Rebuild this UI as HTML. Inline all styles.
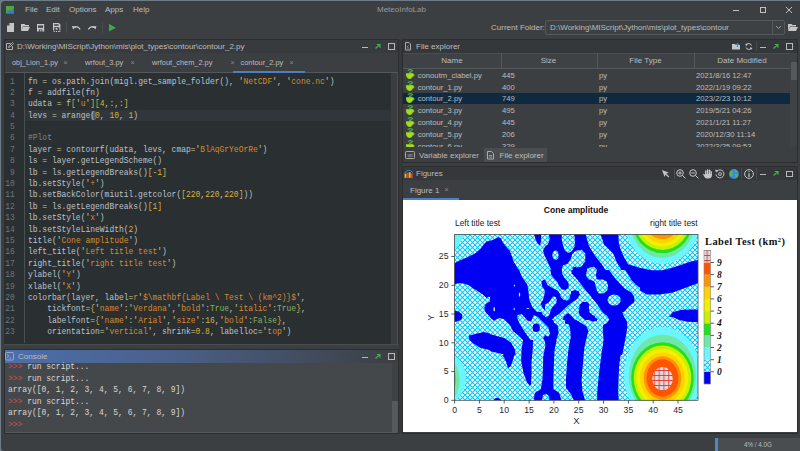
<!DOCTYPE html>
<html><head><meta charset="utf-8"><style>
*{margin:0;padding:0;box-sizing:border-box}
html,body{width:800px;height:451px;overflow:hidden;background:#6e7c88}
body{position:relative;font-family:"Liberation Sans",sans-serif;font-size:8px;color:#bcbcbc}
.a{position:absolute}
.t{position:absolute;white-space:pre;line-height:10px}
i{font-style:normal}
#win{left:1px;top:1px;width:799px;height:450px;background:#3c3f41;border-top-left-radius:4px;border-bottom-left-radius:3px;overflow:hidden}
.mono{font-family:"Liberation Mono",monospace;font-size:8px;white-space:pre}
.code{color:#bcc4ca}
.code .o{color:#d6c99a}
.code .b{color:#d2b048}
.code .s{color:#d98a2c}
.code .n{color:#d6b23a}
.code .k{color:#86b45e}
.code .c{color:#7d878c}
.ln{color:#6b767d;text-align:right}
svg{position:absolute;overflow:visible}
.x{font-size:7px;color:#8d8d8d}
</style></head><body>
<div id="win" class="a"></div>
<svg style="left:6px;top:6px" width="8" height="8" viewBox="0 0 8 8"><rect x="0" y="0" width="8" height="7.5" fill="#3fae3f"/><path d="M0 7.5 L3 4 L5 5 L8 2 L8 7.5Z" fill="#2a7fd4"/><circle cx="4" cy="5" r="0.9" fill="#d24a3a"/><circle cx="1.8" cy="2" r="0.8" fill="#d27a4a"/></svg>
<div class="t" style="left:25px;top:5px">File</div>
<div class="t" style="left:46px;top:5px">Edit</div>
<div class="t" style="left:69px;top:5px">Options</div>
<div class="t" style="left:105px;top:5px">Apps</div>
<div class="t" style="left:133px;top:5px">Help</div>
<div class="t" style="left:377px;top:5px;color:#9a9a9a">MeteoInfoLab</div>
<div class="a" style="left:733px;top:9.5px;width:6px;height:1px;background:#c0c0c0"></div>
<div class="a" style="left:759.5px;top:7px;width:6px;height:6px;border:1px solid #c0c0c0"></div>
<svg style="left:786px;top:7px" width="6" height="6" viewBox="0 0 6 6"><path d="M0 0L6 6M6 0L0 6" stroke="#c0c0c0" stroke-width="1"/></svg>
<svg style="left:6.5px;top:23px" width="7" height="9" viewBox="0 0 7 9"><path d="M2.5 0H7V9H0V2.5Z" fill="#c6c6c6"/><path d="M0 2.5L2.5 0V2.5Z" fill="#3c3f41"/></svg>
<svg style="left:21px;top:24px" width="9" height="7" viewBox="0 0 9 7"><path d="M0 0H3.5L4.5 1H8V2.5H2L0 7Z" fill="#c6c6c6"/><path d="M2 3H9L7 7H0Z" fill="#c6c6c6"/></svg>
<svg style="left:37px;top:23.8px" width="7.2" height="7.5" viewBox="0 0 7.2 7.5"><path d="M0 0H7.2V7.5H0Z M1.1 1.4V3.7H6.1V1.4Z M1.9 5.5V7.5H5.3V5.5Z" fill="#c6c6c6" fill-rule="evenodd"/><rect x="2.9" y="6.2" width="1.6" height="1.1" fill="#c6c6c6"/></svg>
<svg style="left:52.6px;top:23px" width="7.4" height="9" viewBox="0 0 7.4 9"><path d="M0 0H5.9L7.4 1.5V7.6H6.4V4.3H1.2V7.6H0Z M1.2 1.3V2.8H5.6V1.3Z" fill="#c6c6c6" fill-rule="evenodd"/><rect x="2.6" y="5.2" width="2" height="1.6" fill="#c6c6c6"/><rect x="0.8" y="8" width="1.2" height="1" fill="#c6c6c6"/><rect x="2.9" y="8" width="1.2" height="1" fill="#c6c6c6"/><rect x="5" y="8" width="1.2" height="1" fill="#c6c6c6"/><rect x="6.4" y="8" width="1" height="1" fill="#c6c6c6"/></svg>
<div class="a" style="left:66px;top:21.5px;width:1px;height:11.5px;background:#4a4d4f"></div>
<svg style="left:71.8px;top:24.6px" width="8.5" height="5" viewBox="0 0 8.5 5"><path d="M2.4 2.6Q5.2 0.2 8.2 4.4" stroke="#c6c6c6" stroke-width="1.3" fill="none"/><path d="M0 0.9L3.9 1.4L1.1 4.6Z" fill="#c6c6c6"/></svg>
<svg style="left:87.8px;top:24.6px" width="8.5" height="5" viewBox="0 0 8.5 5"><path d="M6.1 2.6Q3.3 0.2 0.3 4.4" stroke="#c6c6c6" stroke-width="1.3" fill="none"/><path d="M8.5 0.9L4.6 1.4L7.4 4.6Z" fill="#c6c6c6"/></svg>
<div class="a" style="left:101.5px;top:21.5px;width:1px;height:11.5px;background:#4a4d4f"></div>
<svg style="left:108.5px;top:24px" width="7" height="7.5" viewBox="0 0 7 7.5"><path d="M0 0L7 3.75L0 7.5Z" fill="#3ea94b"/></svg>
<div class="t" style="left:491px;top:23px">Current Folder:</div>
<div class="a" style="left:545px;top:20px;width:240px;height:15px;border:1px solid #56595b;border-radius:2px;background:#3e4143"></div>
<div class="a" style="left:772px;top:21px;width:1px;height:13px;background:#56595b"></div>
<svg style="left:776px;top:25.5px" width="5" height="3" viewBox="0 0 5 3"><path d="M0 0L2.5 2.5L5 0" stroke="#a8a8a8" stroke-width="0.9" fill="none"/></svg>
<div class="t" style="left:550px;top:23px">D:\Working\MIScript\Jython\mis\plot_types\contour</div>
<svg style="left:788px;top:24px" width="10" height="7" viewBox="0 0 10 7"><path d="M0 0H3.5L4.5 1H8V2.5H2L0 7Z" fill="#c6c6c6"/><path d="M2 3H10L8 7H0Z" fill="#c6c6c6"/></svg>
<div class="a" style="left:4px;top:39px;width:395px;height:305px;background:#3c3f41;border:1px solid #2b2d2e"></div>
<div class="a" style="left:5px;top:40px;width:393px;height:12.5px;background:#383b3d"></div>
<svg style="left:6px;top:42px" width="8" height="8" viewBox="0 0 8 8"><path d="M0.5 1.5H4.5M0.5 1.5V7.5H6.5V4" stroke="#b0b0b0" stroke-width="1" fill="none"/><path d="M2.5 5.5L3 4L6.5 0.5L7.5 1.5L4 5Z" fill="none" stroke="#b0b0b0" stroke-width="0.9"/></svg>
<div class="t" style="left:17px;top:41.6px">D:\Working\MIScript\Jython\mis\plot_types\contour\contour_2.py</div>
<div class="a" style="left:362px;top:46.5px;width:6px;height:1px;background:#b8b8b8"></div>
<svg style="left:375px;top:43.5px" width="6" height="5" viewBox="0 0 6 5"><path d="M0.5 4.5L5 0.5M1.8 0.5H5V3.7" stroke="#3cb04a" stroke-width="1.2" fill="none"/></svg>
<div class="a" style="left:388px;top:43.0px;width:6.5px;height:6.5px;border:1px solid #b8b8b8"></div>
<div class="t" style="left:12px;top:58.3px;font-size:7.4px">obj_Lion_1.py</div>
<div class="t" style="left:85px;top:58.3px;font-size:7.4px">wrfout_3.py</div>
<div class="t" style="left:152px;top:58.3px;font-size:7.4px">wrfout_chem_2.py</div>
<div class="t" style="left:240.5px;top:58.3px;font-size:7.4px">contour_2.py</div>
<div class="t x" style="left:63.5px;top:57.5px">×</div>
<div class="t x" style="left:130.5px;top:57.5px">×</div>
<div class="t x" style="left:230.5px;top:57.5px">×</div>
<div class="t x" style="left:289.5px;top:57.5px">×</div>
<div class="a" style="left:5px;top:72px;width:393px;height:272.5px;background:#2a2f32;border-top:1px solid #55585a;border-bottom:1px solid #4a4d50"></div>
<div class="a" style="left:24px;top:73px;width:1px;height:270px;background:#4a4f52"></div>
<div class="a" style="left:233px;top:71px;width:72px;height:2px;background:#4d80c0"></div>
<div class="a" style="left:25px;top:109.5px;width:366px;height:11px;background:#30363a"></div>
<div class="a" style="left:91px;top:110.5px;width:5px;height:9.5px;background:#46606f;border-radius:1.5px"></div>
<div class="a mono ln" style="left:1px;top:75.5px;width:13.8px;line-height:11.39px;font-size:9.2px;transform:scaleX(0.8682);transform-origin:100% 0">1
2
3
4
5
6
7
8
9
10
11
12
13
14
15
16
17
18
19
20
21
22
23</div>
<div class="a mono code" style="left:28.4px;top:75.5px;line-height:11.39px;font-size:9.2px;transform:scaleX(0.8682);transform-origin:0 0">fn <i class="o">=</i> os<i class="o">.</i>path<i class="o">.</i>join(migl<i class="o">.</i>get_sample_folder(), <i class="o">'</i><i class="s">NetCDF</i><i class="o">'</i>, <i class="o">'</i><i class="s">cone.nc</i><i class="o">'</i>)
f <i class="o">=</i> addfile(fn)
udata <i class="o">=</i> f<i class="b">[</i><i class="o">'</i><i class="s">u</i><i class="o">'</i><i class="b">]</i><i class="b">[</i><i class="n">4</i>,<i class="o">:</i>,<i class="o">:</i><i class="b">]</i>
levs <i class="o">=</i> arange(<i class="n">0</i>, <i class="n">10</i>, <i class="n">1</i>)

<i class="c">#Plot</i>
layer <i class="o">=</i> contourf(udata, levs, cmap<i class="o">=</i><i class="o">'</i><i class="s">BlAqGrYeOrRe</i><i class="o">'</i>)
ls <i class="o">=</i> layer<i class="o">.</i>getLegendScheme()
lb <i class="o">=</i> ls<i class="o">.</i>getLegendBreaks()<i class="b">[</i><i class="o">-</i><i class="n">1</i><i class="b">]</i>
lb<i class="o">.</i>setStyle(<i class="o">'</i><i class="s">+</i><i class="o">'</i>)
lb<i class="o">.</i>setBackColor(miutil<i class="o">.</i>getcolor(<i class="b">[</i><i class="n">220</i>,<i class="n">220</i>,<i class="n">220</i><i class="b">]</i>))
lb <i class="o">=</i> ls<i class="o">.</i>getLegendBreaks()<i class="b">[</i><i class="n">1</i><i class="b">]</i>
lb<i class="o">.</i>setStyle(<i class="o">'</i><i class="s">x</i><i class="o">'</i>)
lb<i class="o">.</i>setStyleLineWidth(<i class="n">2</i>)
title(<i class="o">'</i><i class="s">Cone amplitude</i><i class="o">'</i>)
left_title(<i class="o">'</i><i class="s">Left title test</i><i class="o">'</i>)
right_title(<i class="o">'</i><i class="s">right title test</i><i class="o">'</i>)
ylabel(<i class="o">'</i><i class="s">Y</i><i class="o">'</i>)
xlabel(<i class="o">'</i><i class="s">X</i><i class="o">'</i>)
colorbar(layer, label<i class="o">=</i><i class="s">r</i><i class="o">'</i><i class="s">$\mathbf{Label \ Test \ (km^2)}$</i><i class="o">'</i>,
    tickfont<i class="o">=</i><i class="b">{</i><i class="o">'</i><i class="s">name</i><i class="o">'</i><i class="o">:</i><i class="o">'</i><i class="s">Verdana</i><i class="o">'</i>,<i class="o">'</i><i class="s">bold</i><i class="o">'</i><i class="o">:</i><i class="k">True</i>,<i class="o">'</i><i class="s">italic</i><i class="o">'</i><i class="o">:</i><i class="k">True</i><i class="b">}</i>,
    labelfont<i class="o">=</i><i class="b">{</i><i class="o">'</i><i class="s">name</i><i class="o">'</i><i class="o">:</i><i class="o">'</i><i class="s">Arial</i><i class="o">'</i>,<i class="o">'</i><i class="s">size</i><i class="o">'</i><i class="o">:</i><i class="n">16</i>,<i class="o">'</i><i class="s">bold</i><i class="o">'</i><i class="o">:</i><i class="k">False</i><i class="b">}</i>,
    orientation<i class="o">=</i><i class="o">'</i><i class="s">vertical</i><i class="o">'</i>, shrink<i class="o">=</i><i class="n">0.8</i>, labelloc<i class="o">=</i><i class="o">'</i><i class="s">top</i><i class="o">'</i>)</div>
<div class="a" style="left:391px;top:73px;width:6px;height:271px;background:#3a3e41"></div>
<div class="a" style="left:397px;top:72px;width:1px;height:273px;background:#4e5154"></div>
<div class="a" style="left:399px;top:39px;width:3px;height:395px;background:#363839"></div>
<div class="a" style="left:4px;top:349px;width:395px;height:85px;background:#45484a;border:1px solid #2b2d2e"></div>
<div class="a" style="left:5px;top:350px;width:393px;height:12.5px;background:linear-gradient(90deg,#4c6fae 0%,#4a5f86 45%,#3c3f41 100%)"></div>
<svg style="left:5px;top:352px" width="9" height="8.5" viewBox="0 0 9 8.5"><rect x="0.5" y="0.5" width="8" height="7.5" rx="1" fill="none" stroke="#a9b6cc" stroke-width="0.8"/><path d="M2 2.3L3.8 3.9L2 5.5M4.2 6.1H6" stroke="#a9b6cc" stroke-width="0.8" fill="none"/></svg>
<div class="t" style="left:18px;top:352px">Console</div>
<div class="a" style="left:362px;top:356.5px;width:6px;height:1px;background:#b8b8b8"></div>
<svg style="left:375px;top:353.5px" width="6" height="5" viewBox="0 0 6 5"><path d="M0.5 4.5L5 0.5M1.8 0.5H5V3.7" stroke="#3cb04a" stroke-width="1.2" fill="none"/></svg>
<div class="a" style="left:388px;top:353.0px;width:6.5px;height:6.5px;border:1px solid #b8b8b8"></div>
<div class="a mono" style="left:8px;top:361.4px;line-height:11.5px;color:#d8d8d8;font-size:9.2px;transform:scaleX(0.8682);transform-origin:0 0"><i class="p">&gt;&gt;&gt;</i> run script...
<i class="p">&gt;&gt;&gt;</i> run script...
array([0, 1, 2, 3, 4, 5, 6, 7, 8, 9])
<i class="p">&gt;&gt;&gt;</i> run script...
array([0, 1, 2, 3, 4, 5, 6, 7, 8, 9])
<i class="p">&gt;&gt;&gt;</i></div>
<style>.p{color:#d24a4a}</style>
<div class="a" style="left:5px;top:432px;width:393px;height:1px;background:#56595b"></div>
<div class="a" style="left:391.5px;top:363px;width:6.5px;height:69px;background:#3f4244"></div>
<div class="a" style="left:391.5px;top:401px;width:6.5px;height:31px;background:#55595b"></div>
<div class="a" style="left:402px;top:39px;width:396px;height:124px;background:#3c3f41;border:1px solid #2b2d2e"></div>
<div class="a" style="left:403px;top:40px;width:394px;height:12.5px;background:#35383a"></div>
<svg style="left:404.5px;top:41.5px" width="6" height="8.5" viewBox="0 0 6 8.5"><path d="M0.5 0.5H4L5.5 2V8H0.5Z" fill="none" stroke="#b8b8b8" stroke-width="0.9"/><path d="M2 5L3.5 3.5M2 6H4" stroke="#b8b8b8" stroke-width="0.7"/></svg>
<div class="t" style="left:416px;top:42px">File explorer</div>
<svg style="left:731.5px;top:42.5px" width="8" height="6.5" viewBox="0 0 8 6.5"><path d="M0 1H3L4 2H8V6.5H0Z" fill="#c6c6c6"/><path d="M5.5 4V0.8M4.2 2L5.5 0.5L6.8 2" stroke="#3a8fd8" stroke-width="1.1" fill="none"/></svg>
<svg style="left:745px;top:42.5px" width="7.5" height="7" viewBox="0 0 7.5 7"><path d="M6.5 2.5A3 3 0 0 0 1 2.2M1 4.5A3 3 0 0 0 6.5 4.8" stroke="#c6c6c6" stroke-width="1" fill="none"/><path d="M0 1L2 3.2L2.4 0.5Z M7.5 6L5.5 3.8L5.1 6.5Z" fill="#c6c6c6"/></svg>
<div class="a" style="left:756px;top:41px;width:1px;height:10px;background:#474a4c"></div>
<div class="a" style="left:760px;top:46.5px;width:6px;height:1px;background:#b8b8b8"></div>
<svg style="left:773px;top:43.5px" width="6" height="5" viewBox="0 0 6 5"><path d="M0.5 4.5L5 0.5M1.8 0.5H5V3.7" stroke="#3cb04a" stroke-width="1.2" fill="none"/></svg>
<div class="a" style="left:786px;top:43.0px;width:6.5px;height:6.5px;border:1px solid #b8b8b8"></div>
<div class="a" style="left:403px;top:52.5px;width:387px;height:16px;background:#3f4244;border-top:1px solid #4a4d50;border-bottom:1px solid #55585a"></div>
<div class="a" style="left:500.5px;top:53px;width:1px;height:15px;background:#55585a"></div>
<div class="a" style="left:596.5px;top:53px;width:1px;height:15px;background:#55585a"></div>
<div class="a" style="left:693.5px;top:53px;width:1px;height:15px;background:#55585a"></div>
<div class="t" style="left:412px;width:80px;text-align:center;top:56px">Name</div>
<div class="t" style="left:508.5px;width:80px;text-align:center;top:56px">Size</div>
<div class="t" style="left:605.5px;width:80px;text-align:center;top:56px">File Type</div>
<div class="t" style="left:702px;width:80px;text-align:center;top:56px">Date Modified</div>
<div class="a" style="left:403px;top:92.5px;width:387px;height:11.6px;background:#0f2a40"></div>
<div class="a" style="left:403px;top:69px;width:387px;height:78px;overflow:hidden"></div>
<div class="a" style="left:0;top:0;width:800px;height:147px;overflow:hidden"><svg style="left:406px;top:69.2px" width="9" height="10" viewBox="0 0 9 10"><path d="M1.8 1.6Q4.2 -0.4 6.6 1.4Q5.5 3 3 3.4Q5.2 3.9 5.8 5" stroke="#45a845" stroke-width="1.15" fill="none"/><path d="M0 4.2H7.2Q7.3 9.6 3.6 9.9Q-0.1 9.6 0 4.2Z" fill="#a4dc1c"/><path d="M7 5Q9.2 5.3 7.2 7.4" stroke="#a4dc1c" stroke-width="1" fill="none"/></svg><div class="t" style="left:417.7px;top:70.7px;font-size:7.7px">conoutm_clabel.py</div><div class="t" style="left:502px;top:70.7px;font-size:7.7px">445</div><div class="t" style="left:599px;top:70.7px;font-size:7.7px">py</div><div class="t" style="left:696px;top:70.7px;font-size:7.7px">2021/8/16 12:47</div><svg style="left:406px;top:81.05px" width="9" height="10" viewBox="0 0 9 10"><path d="M1.8 1.6Q4.2 -0.4 6.6 1.4Q5.5 3 3 3.4Q5.2 3.9 5.8 5" stroke="#45a845" stroke-width="1.15" fill="none"/><path d="M0 4.2H7.2Q7.3 9.6 3.6 9.9Q-0.1 9.6 0 4.2Z" fill="#a4dc1c"/><path d="M7 5Q9.2 5.3 7.2 7.4" stroke="#a4dc1c" stroke-width="1" fill="none"/></svg><div class="t" style="left:417.7px;top:82.55px;font-size:7.7px">contour_1.py</div><div class="t" style="left:502px;top:82.55px;font-size:7.7px">400</div><div class="t" style="left:599px;top:82.55px;font-size:7.7px">py</div><div class="t" style="left:696px;top:82.55px;font-size:7.7px">2022/1/19 09:22</div><svg style="left:406px;top:92.9px" width="9" height="10" viewBox="0 0 9 10"><path d="M1.8 1.6Q4.2 -0.4 6.6 1.4Q5.5 3 3 3.4Q5.2 3.9 5.8 5" stroke="#45a845" stroke-width="1.15" fill="none"/><path d="M0 4.2H7.2Q7.3 9.6 3.6 9.9Q-0.1 9.6 0 4.2Z" fill="#a4dc1c"/><path d="M7 5Q9.2 5.3 7.2 7.4" stroke="#a4dc1c" stroke-width="1" fill="none"/></svg><div class="t" style="left:417.7px;top:94.4px;font-size:7.7px">contour_2.py</div><div class="t" style="left:502px;top:94.4px;font-size:7.7px">749</div><div class="t" style="left:599px;top:94.4px;font-size:7.7px">py</div><div class="t" style="left:696px;top:94.4px;font-size:7.7px">2023/2/23 10:12</div><svg style="left:406px;top:104.75px" width="9" height="10" viewBox="0 0 9 10"><path d="M1.8 1.6Q4.2 -0.4 6.6 1.4Q5.5 3 3 3.4Q5.2 3.9 5.8 5" stroke="#45a845" stroke-width="1.15" fill="none"/><path d="M0 4.2H7.2Q7.3 9.6 3.6 9.9Q-0.1 9.6 0 4.2Z" fill="#a4dc1c"/><path d="M7 5Q9.2 5.3 7.2 7.4" stroke="#a4dc1c" stroke-width="1" fill="none"/></svg><div class="t" style="left:417.7px;top:106.25px;font-size:7.7px">contour_3.py</div><div class="t" style="left:502px;top:106.25px;font-size:7.7px">495</div><div class="t" style="left:599px;top:106.25px;font-size:7.7px">py</div><div class="t" style="left:696px;top:106.25px;font-size:7.7px">2019/5/21 04:26</div><svg style="left:406px;top:116.60000000000001px" width="9" height="10" viewBox="0 0 9 10"><path d="M1.8 1.6Q4.2 -0.4 6.6 1.4Q5.5 3 3 3.4Q5.2 3.9 5.8 5" stroke="#45a845" stroke-width="1.15" fill="none"/><path d="M0 4.2H7.2Q7.3 9.6 3.6 9.9Q-0.1 9.6 0 4.2Z" fill="#a4dc1c"/><path d="M7 5Q9.2 5.3 7.2 7.4" stroke="#a4dc1c" stroke-width="1" fill="none"/></svg><div class="t" style="left:417.7px;top:118.10000000000001px;font-size:7.7px">contour_4.py</div><div class="t" style="left:502px;top:118.10000000000001px;font-size:7.7px">445</div><div class="t" style="left:599px;top:118.10000000000001px;font-size:7.7px">py</div><div class="t" style="left:696px;top:118.10000000000001px;font-size:7.7px">2021/1/21 11:27</div><svg style="left:406px;top:128.45px" width="9" height="10" viewBox="0 0 9 10"><path d="M1.8 1.6Q4.2 -0.4 6.6 1.4Q5.5 3 3 3.4Q5.2 3.9 5.8 5" stroke="#45a845" stroke-width="1.15" fill="none"/><path d="M0 4.2H7.2Q7.3 9.6 3.6 9.9Q-0.1 9.6 0 4.2Z" fill="#a4dc1c"/><path d="M7 5Q9.2 5.3 7.2 7.4" stroke="#a4dc1c" stroke-width="1" fill="none"/></svg><div class="t" style="left:417.7px;top:129.95px;font-size:7.7px">contour_5.py</div><div class="t" style="left:502px;top:129.95px;font-size:7.7px">206</div><div class="t" style="left:599px;top:129.95px;font-size:7.7px">py</div><div class="t" style="left:696px;top:129.95px;font-size:7.7px">2020/12/30 11:14</div><svg style="left:406px;top:140.29999999999998px" width="9" height="10" viewBox="0 0 9 10"><path d="M1.8 1.6Q4.2 -0.4 6.6 1.4Q5.5 3 3 3.4Q5.2 3.9 5.8 5" stroke="#45a845" stroke-width="1.15" fill="none"/><path d="M0 4.2H7.2Q7.3 9.6 3.6 9.9Q-0.1 9.6 0 4.2Z" fill="#a4dc1c"/><path d="M7 5Q9.2 5.3 7.2 7.4" stroke="#a4dc1c" stroke-width="1" fill="none"/></svg><div class="t" style="left:417.7px;top:141.79999999999998px;font-size:7.7px">contour_6.py</div><div class="t" style="left:502px;top:141.79999999999998px;font-size:7.7px">329</div><div class="t" style="left:599px;top:141.79999999999998px;font-size:7.7px">py</div><div class="t" style="left:696px;top:141.79999999999998px;font-size:7.7px">2022/3/25 09:53</div></div>
<div class="a" style="left:790px;top:53px;width:7px;height:94px;background:#3f4244"></div>
<div class="a" style="left:790.5px;top:62px;width:6px;height:18px;background:#55595b;border-radius:1px"></div>
<div class="a" style="left:403px;top:147px;width:394px;height:15px;background:#3c3f41"></div>
<div class="a" style="left:484px;top:147.5px;width:63px;height:14px;background:#4a4d50"></div>
<svg style="left:405px;top:151px" width="10" height="8" viewBox="0 0 10 8"><rect x="0.5" y="0.5" width="9" height="7" rx="1" fill="none" stroke="#b8b8b8" stroke-width="0.9"/><text x="5" y="6" font-size="4.5" text-anchor="middle" fill="#b8b8b8" font-family="Liberation Sans">uri</text></svg>
<div class="t" style="left:419px;top:150.8px">Variable explorer</div>
<svg style="left:487px;top:150.5px" width="7" height="8.5" viewBox="0 0 7 8.5"><path d="M0.5 0.5H4.5L6.5 2.5V8H0.5Z" fill="none" stroke="#b8b8b8" stroke-width="0.9"/><path d="M2 4.5H5M2 6H5" stroke="#b8b8b8" stroke-width="0.7"/></svg>
<div class="t" style="left:499.6px;top:150.8px">File explorer</div>
<div class="a" style="left:402px;top:166px;width:396px;height:268px;background:#3c3f41;border:1px solid #2b2d2e"></div>
<div class="a" style="left:403px;top:167px;width:394px;height:13px;background:#35383a"></div>
<svg style="left:403.5px;top:169px" width="9" height="9" viewBox="0 0 9 9"><path d="M0.5 4.5Q4 -1.5 8.8 3.5" stroke="#3a7fd0" stroke-width="1" fill="none"/><path d="M0 8.6H9" stroke="#9a9a9a" stroke-width="0.6"/><rect x="0.6" y="4.6" width="1.9" height="3.8" fill="#e8c21a"/><rect x="2.7" y="3.6" width="1.9" height="4.8" fill="#e03a3a"/><rect x="4.8" y="3.4" width="1.9" height="5" fill="#e8c21a"/><rect x="6.9" y="4.4" width="1.9" height="4" fill="#e03a3a"/></svg>
<div class="t" style="left:416px;top:169px">Figures</div>
<div class="t" style="left:410px;top:185.8px">Figure 1</div>
<div class="t x" style="left:444.5px;top:184.5px">×</div>
<div class="a" style="left:403px;top:198px;width:55.5px;height:2px;background:#4d80c0"></div>
<svg style="left:662px;top:169.5px" width="7.5" height="7.5" viewBox="0 0 7.5 7.5"><path d="M0 0L7 2.8L4.2 3.6L7.2 6.6L6.4 7.4L3.4 4.4L2.6 7Z" fill="#c6c6c6"/></svg>
<div class="a" style="left:673.5px;top:168px;width:1px;height:11px;background:#4a4d4f"></div>
<svg style="left:676px;top:168.5px" width="10" height="10" viewBox="0 0 10 10"><circle cx="4" cy="4" r="3.3" stroke="#c6c6c6" stroke-width="1" fill="none"/><path d="M6.5 6.5L9.5 9.5M2.3 4H5.7M4 2.3V5.7" stroke="#c6c6c6" stroke-width="1"/></svg>
<svg style="left:689px;top:168.5px" width="10" height="10" viewBox="0 0 10 10"><circle cx="4" cy="4" r="3.3" stroke="#c6c6c6" stroke-width="1" fill="none"/><path d="M6.5 6.5L9.5 9.5M2.3 4H5.7" stroke="#c6c6c6" stroke-width="1"/></svg>
<svg style="left:703px;top:168.8px" width="9" height="9.5" viewBox="0 0 9 9.5"><rect x="2" y="1.2" width="1.5" height="5" rx="0.75" fill="#c6c6c6"/><rect x="3.9" y="0.2" width="1.5" height="5.5" rx="0.75" fill="#c6c6c6"/><rect x="5.8" y="0.6" width="1.5" height="5.3" rx="0.75" fill="#c6c6c6"/><rect x="7.5" y="2" width="1.4" height="4" rx="0.7" fill="#c6c6c6"/><path d="M2 5H8.9V6.5Q8.6 9.5 5.5 9.5H4Q2.5 9.5 1.5 8L0.2 5.8Q0 5 0.8 4.8L2 5.8Z" fill="#c6c6c6"/></svg>
<svg style="left:715px;top:168.5px" width="10" height="10" viewBox="0 0 10 10"><path d="M2 2.2A4 4 0 1 1 1 5.5" stroke="#c6c6c6" stroke-width="1" fill="none"/><path d="M0.2 0.5L3.2 1.5L1 3.7Z" fill="#c6c6c6"/><circle cx="5" cy="5" r="1.5" stroke="#c6c6c6" stroke-width="0.9" fill="none"/></svg>
<svg style="left:728.5px;top:168.5px" width="10" height="10" viewBox="0 0 10 10"><circle cx="5" cy="5" r="5" fill="#3a8ad8"/><path d="M2 1.5Q4 2 3.8 4Q2.5 5 3.5 7Q2 8 1 6.5Q0 4 2 1.5Z M5.5 0.5Q8 1 8.5 3Q7 3.5 6 2.5Z M6 5Q8 4.5 9 6Q8 8.5 6.5 9Q6.5 7 6 5Z" fill="#5ab84a"/></svg>
<div class="a" style="left:740.5px;top:168px;width:1px;height:11px;background:#4a4d4f"></div>
<svg style="left:744px;top:168.5px" width="10" height="10" viewBox="0 0 10 10"><circle cx="5" cy="5" r="4.4" stroke="#c6c6c6" stroke-width="1" fill="none"/><path d="M5 4.2V8" stroke="#c6c6c6" stroke-width="1.2"/><circle cx="5" cy="2.6" r="0.7" fill="#c6c6c6"/></svg>
<div class="a" style="left:756px;top:168px;width:1px;height:11px;background:#4a4d4f"></div>
<div class="a" style="left:760px;top:174px;width:6px;height:1px;background:#b8b8b8"></div>
<svg style="left:773px;top:171px" width="6" height="5" viewBox="0 0 6 5"><path d="M0.5 4.5L5 0.5M1.8 0.5H5V3.7" stroke="#3cb04a" stroke-width="1.2" fill="none"/></svg>
<div class="a" style="left:786px;top:170.5px;width:6.5px;height:6.5px;border:1px solid #b8b8b8"></div>
<div class="a" style="left:403px;top:200px;width:394px;height:232px;background:#fff"></div>
<svg style="left:0;top:0" width="800" height="451" viewBox="0 0 800 451"><defs>
<pattern id="hx" patternUnits="userSpaceOnUse" width="5" height="5"><rect width="5" height="5" fill="#ffffff"/><path d="M-1,-1L6,6M6,-1L-1,6" stroke="#00c8ff" stroke-width="1.1"/></pattern>
<pattern id="hp" patternUnits="userSpaceOnUse" width="4.8" height="5"><rect width="4.8" height="5" fill="#dcdcdc"/><path d="M1.6,0V5M0,0.5H4.8" stroke="#f02828" stroke-width="0.85"/></pattern>
<clipPath id="pc"><rect x="454.6" y="234.2" width="243.4" height="166.1"/></clipPath>
<clipPath id="c0"><rect x="454" y="233" width="81" height="56"/></clipPath><clipPath id="c1"><rect x="535" y="233" width="41" height="56"/></clipPath><clipPath id="c2"><rect x="576" y="233" width="122" height="84"/></clipPath><clipPath id="c3"><rect x="454" y="289" width="81" height="28"/></clipPath><clipPath id="c4"><rect x="454" y="317" width="122" height="84"/></clipPath><clipPath id="c5"><rect x="576" y="317" width="122" height="84"/></clipPath><clipPath id="c6"><rect x="490" y="270" width="150" height="85"/></clipPath><clipPath id="c7"><rect x="518" y="340" width="62" height="61"/></clipPath><clipPath id="c8"><rect x="545" y="270" width="50" height="50"/></clipPath></defs><g clip-path="url(#pc)"><rect x="454" y="233" width="245" height="168" fill="url(#hx)"/><g clip-path="url(#c0)"><path d="M455.0,262.8 L461.5,259.7 L468.9,256.6 L475.7,252.9 L480.7,248.5 L483.8,244.2 L486.5,241.4 L491.3,240.5 L495.6,238.6 L498.7,237.0 L501.0,238.6 L503.1,242.9 L506.2,246.7 L509.9,251.0 L511.8,256.0 L513.6,261.6 L517.4,267.8 L521.7,274.0 L525.4,279.0 L528.5,285.2 L529.2,289.0 L473.9,289.0 L468.9,285.2 L462.7,283.3 L457.7,283.3 L454.0,284.6 L454.0,262.8Z" fill="#0000f5"/><path d="M533.5,233.0 L536.0,233.0 L536.0,240.0Z" fill="#0000f5"/><path d="M454.0,233.0 L466.4,233.0 L462.7,238.0 L459.0,244.2 L455.0,250.4 L454.0,251.0Z" fill="#5ff8ff"/></g><g clip-path="url(#c1)"><path d="M535,233H576V289H535Z" fill="#0000f5"/><path d="M535.0,238.0 L537.5,243.6 L540.0,245.4 L541.2,240.5 L541.0,235.5 L542.5,233.0 L548.7,233.0 L549.7,239.8 L548.0,244.2 L544.9,246.7 L543.1,250.4 L544.7,256.0 L547.4,261.6 L550.5,268.4 L554.3,274.6 L557.4,280.2 L559.2,285.2 L558.6,289.0 L547.4,289.0 L546.4,283.3 L544.9,280.0 L542.7,279.6 L541.2,282.7 L541.0,289.0 L535.0,289.0Z" fill="url(#hx)"/><path d="M561.7,233.0 L574.1,233.0 L575.0,240.5 L574.5,246.7 L571.6,251.6 L567.9,252.9 L564.8,250.4 L563.0,245.4 L561.7,239.2Z" fill="url(#hx)"/><path d="M574.8,251.6 L581.0,250.4 L585.3,252.3 L585.9,257.8 L584.1,262.8 L580.3,265.9 L576.0,266.5 L572.3,267.8 L573.5,272.8 L577.2,279.0 L581.0,283.9 L583.4,289.0 L568.5,289.0 L567.9,285.2 L566.1,280.2 L563.6,274.0 L561.7,269.0 L563.0,265.3 L567.3,264.1 L570.4,259.7 L572.3,254.1Z" fill="url(#hx)"/><path d="M585.9,233.0 L599.6,233.0 L602.7,242.9 L605.8,250.4 L609.5,255.4 L615.7,257.8 L617.0,257.8 L617.0,277.7 L613.3,274.0 L609.5,269.0 L604.6,264.1 L600.8,259.1 L596.5,252.9 L592.1,246.7 L589.0,241.7Z" fill="url(#hx)"/><path d="M587.2,267.8 L593.4,265.9 L597.1,269.0 L598.4,275.2 L599.6,279.0 L604.6,279.6 L607.7,282.7 L608.3,289.0 L594.6,289.0 L593.4,285.2 L589.7,282.1 L586.6,277.7 L585.9,271.5Z" fill="url(#hx)"/><path d="M552.4,255.1 a3.1,4.7 0 1,0 6.2,0 a3.1,4.7 0 1,0 -6.2,0Z" fill="url(#hx)"/></g><g clip-path="url(#c2)"><path d="M576.0,233.0 L585.3,233.0 L589.0,246.0 L594.6,255.3 L602.1,264.7 L608.6,274.9 L615.1,283.3 L622.6,290.7 L630.0,298.2 L633.7,307.5 L630.0,317.0 L576.0,317.0Z" fill="#0000f5"/><path d="M600.2,233.0 L618.3,233.0 L618.8,242.9 L620.5,249.2 L623.7,256.6 L628.0,264.3 L641.0,268.0 L651.6,270.2 L662.4,270.2 L673.0,267.5 L682.9,264.3 L689.2,262.1 L698.0,260.0 L698.0,283.3 L687.7,287.0 L672.8,292.6 L659.8,294.5 L646.8,294.5 L637.5,288.9 L630.0,281.4 L622.6,272.1 L617.0,262.8 L613.2,253.5 L603.9,244.2Z" fill="#0000f5"/><path d="M669.1,317.0 L672.8,312.1 L682.1,309.7 L691.5,309.4 L698.0,309.4 L698.0,317.0Z" fill="#0000f5"/><path d="M576.0,250.7 L581.6,249.8 L585.3,253.5 L585.3,260.9 L581.6,266.5 L576.0,267.5Z" fill="url(#hx)"/><path d="M587.2,268.4 L593.7,266.5 L597.4,270.2 L597.4,277.7 L603.9,279.6 L607.7,284.2 L606.7,291.7 L601.1,294.5 L596.5,290.7 L594.6,283.3 L590.0,280.5 L586.2,275.8Z" fill="url(#hx)"/><path d="M576.0,288.9 L580.7,294.5 L581.6,300.0 L577.9,307.5 L576.0,311.2Z" fill="url(#hx)"/><path d="M592.8,317.0 L596.5,311.2 L603.9,308.4 L613.2,307.5 L620.7,311.2 L624.4,317.0Z" fill="url(#hx)"/><path d="M607.7,299.5 a6.5,6.1 0 1,0 13,0 a6.5,6.1 0 1,0 -13,0Z" fill="url(#hx)"/></g><g clip-path="url(#c3)"><path d="M474.5,289.0 L528.5,289.0 L529.3,296.5 L530.4,305.1 L533.5,313.8 L536.0,316.0 L536.0,318.8 L531.0,317.6 L526.0,315.7 L521.7,313.8 L518.0,313.8 L516.7,317.0 L518.6,321.9 L522.3,326.3 L527.3,331.2 L530.4,337.4 L532.0,345.0 L524.9,345.0 L521.1,338.7 L516.1,333.1 L511.8,327.5 L506.8,321.9 L501.8,318.6 L496.9,319.1 L493.1,320.1 L489.4,316.3 L485.3,312.0 L484.2,307.6 L485.7,303.9 L489.8,301.4 L490.9,298.3 L489.0,296.5 L486.5,297.9 L482.8,294.6Z" fill="#0000f5"/><path d="M454.0,310.7 L459.0,311.4 L462.4,315.1 L462.1,319.4 L458.3,321.5 L454.0,321.5Z" fill="#0000f5"/></g><g clip-path="url(#c4)"><path d="M454.0,317.0 L462.4,317.0 L461.4,319.8 L455.9,321.7 L454.0,321.7Z" fill="#0000f5"/><path d="M468.9,335.6 L476.3,333.8 L483.8,331.9 L491.2,333.8 L500.6,337.5 L508.0,339.3 L513.6,344.0 L515.5,350.5 L513.6,358.0 L510.8,366.3 L508.0,368.2 L506.1,361.7 L503.3,356.1 L496.8,352.4 L487.5,349.6 L480.1,347.7 L472.6,343.1 L468.9,339.3Z" fill="#0000f5"/><path d="M489.4,317.0 L515.5,317.0 L511.7,319.8 L506.1,321.1 L498.7,320.7 L493.1,319.2Z" fill="#0000f5"/><path d="M516.4,317.0 L527.6,317.0 L526.6,324.4 L528.5,331.9 L531.3,339.3 L533.1,348.7 L532.2,359.8 L531.3,371.0 L530.4,380.3 L528.5,385.5 L525.7,380.3 L522.9,369.1 L521.0,358.0 L522.0,348.7 L520.1,341.2 L515.5,333.8 L511.7,326.3 L513.6,318.9Z" fill="#0000f5"/><path d="M527.6,317.0 L541.5,317.0 L538.7,320.7 L532.2,322.2 L528.5,320.7Z" fill="#0000f5"/><path d="M541.5,333.8 L549.0,335.6 L550.8,343.1 L549.9,354.2 L547.1,365.4 L545.2,376.6 L543.4,387.8 L542.5,395.2 L541.5,401.0 L534.1,401.0 L535.9,391.5 L537.8,380.3 L540.6,367.3 L541.5,354.2 L542.5,343.1Z" fill="#0000f5"/><path d="M545.2,317.0 L556.4,317.0 L555.5,324.4 L552.7,331.9 L548.0,336.6 L543.4,335.6 L546.2,328.2Z" fill="#0000f5"/><path d="M554.6,317.0 L576.0,317.0 L576.0,401.0 L566.7,401.0 L565.7,391.5 L566.7,376.6 L567.6,363.6 L567.6,344.9 L565.7,328.2 L562.0,324.4 L558.3,322.6Z" fill="#0000f5"/><path d="M492.2,401.0 L495.3,398.2 L498.7,397.8 L502.0,401.0Z" fill="#0000f5"/><path d="M532.2,327.6 a3.7,4.1 0 1,0 7.4,0 a3.7,4.1 0 1,0 -7.4,0Z" fill="#0000f5"/></g><g clip-path="url(#c5)"><path d="M576.0,317.0 L580.7,317.0 L584.4,319.8 L587.2,322.6 L586.2,328.2 L585.3,339.3 L583.8,354.2 L582.5,369.1 L581.6,380.3 L582.5,391.5 L585.3,401.0 L576.0,401.0Z" fill="#0000f5"/><path d="M602.1,317.0 L628.1,317.0 L627.8,324.4 L625.3,333.8 L622.6,343.1 L620.7,354.2 L619.2,365.4 L618.5,378.5 L618.1,391.5 L618.8,401.0 L596.9,401.0 L597.4,389.6 L598.7,376.6 L600.2,363.6 L602.1,350.5 L603.9,337.5 L603.6,326.3Z" fill="#0000f5"/><path d="M672.8,317.0 L698.0,317.0 L698.0,322.2 L687.7,321.7 L678.4,319.8Z" fill="#0000f5"/></g><g clip-path="url(#c6)"><path d="M490,270H640V355H490Z" fill="#0000f5"/><path d="M519.1,270.0 L550.0,270.0 L555.6,279.4 L561.2,287.8 L565.0,291.1 L565.0,298.1 L562.2,297.2 L557.5,292.5 L550.9,288.7 L547.2,285.0 L546.2,280.8 L543.9,279.4 L541.5,281.2 L542.0,285.9 L544.8,290.1 L544.4,295.3 L543.0,300.0 L540.6,303.7 L542.5,307.5 L546.2,312.0 L536.9,312.0 L532.6,307.5 L529.4,300.0 L528.4,291.6 L527.5,285.0 L522.3,277.5Z" fill="url(#hx)"/><path d="M554.7,296.2 L556.5,300.0 L555.6,304.7 L551.9,309.4 L549.0,312.0 L545.3,312.0 L548.1,307.5 L550.9,302.8 L552.8,298.1Z" fill="url(#hx)"/><path d="M562.2,270.0 L565.0,270.0 L565.0,275.6 L563.1,274.7 L561.7,271.9Z" fill="url(#hx)"/><path d="M565.0,270.0 L571.6,270.0 L573.4,275.6 L578.1,281.2 L582.8,286.9 L587.5,292.5 L592.2,298.1 L596.9,303.7 L600.6,309.4 L602.5,312.0 L588.4,312.0 L587.5,305.6 L584.7,302.3 L580.9,302.3 L578.1,305.6 L577.2,312.0 L565.0,312.0Z" fill="url(#hx)"/><path d="M565.0,278.4 L567.8,280.3 L568.7,285.0 L567.8,288.7 L565.0,289.7Z" fill="#0000f5"/><path d="M570.6,291.6 L575.3,290.6 L578.6,292.5 L579.1,297.2 L576.2,300.0 L570.6,300.9 L569.7,297.2Z" fill="#0000f5"/><path d="M586.6,270.0 L596.9,270.0 L595.9,275.6 L596.9,279.4 L602.5,279.4 L606.7,281.2 L608.1,285.9 L607.2,290.6 L603.4,293.4 L598.7,293.4 L596.9,290.6 L595.0,284.1 L591.2,280.3 L587.5,279.4 L586.1,274.7Z" fill="url(#hx)"/><path d="M607.6,300.0 a6.56,5.62 0 1,0 13.12,0 a6.56,5.62 0 1,0 -13.12,0Z" fill="url(#hx)"/><path d="M609.0,270.0 L625.0,270.0 L628.7,275.6 L631.5,280.3 L636.2,285.0 L640.0,287.8 L640.0,312.0 L624.0,312.0 L628.7,306.6 L634.4,301.9 L634.4,297.2 L631.5,292.5 L625.0,288.7 L619.4,283.1 L613.7,276.6Z" fill="url(#hx)"/><path d="M490.0,317.2 L493.8,320.8 L499.1,317.9 L503.8,319.1 L510.0,324.9 L512.9,331.1 L518.6,335.8 L523.4,340.6 L526.2,346.3 L525.3,350.6 L519.6,353.0 L517.6,355.0 L515.7,355.0 L514.8,349.2 L511.0,342.5 L504.3,337.9 L495.7,335.8 L490.0,334.1Z" fill="url(#hx)"/><path d="M517.6,314.9 L521.5,313.9 L524.3,316.8 L527.2,320.6 L531.0,321.5 L533.9,314.9 L537.7,316.8 L543.4,322.5 L548.2,327.3 L550.1,333.9 L548.2,336.8 L545.3,334.9 L543.4,337.7 L544.3,344.4 L545.3,350.1 L544.3,355.0 L533.9,355.0 L532.9,350.1 L531.9,342.5 L529.1,337.7 L526.2,333.9 L522.4,328.2 L518.6,321.5 L517.2,317.7Z" fill="url(#hx)"/><path d="M532.6,327.7 a3.62,4.29 0 1,0 7.24,0 a3.62,4.29 0 1,0 -7.24,0Z" fill="#0000f5"/><path d="M490.0,350.6 L491.1,351.4 L502.4,354.1 L504.3,355.0 L490.0,355.0Z" fill="url(#hx)"/><path d="M541.5,312.0 L551.0,312.0 L550.1,315.8 L546.2,316.8 L542.9,314.9Z" fill="url(#hx)"/><path d="M552.9,317.7 L556.7,315.8 L560.5,313.9 L565.0,312.0 L565.0,355.0 L555.8,355.0 L554.8,345.4 L556.7,338.7 L558.6,333.0 L557.7,325.3 L553.9,322.5Z" fill="url(#hx)"/><path d="M565.0,323.4 L568.8,324.4 L570.2,329.2 L570.7,336.8 L569.8,345.4 L569.3,355.0 L565.0,355.0Z" fill="url(#hx)"/><path d="M568.8,312.0 L578.3,312.0 L582.2,315.8 L586.9,319.1 L592.6,321.5 L596.5,321.1 L597.9,319.1 L593.6,316.8 L589.8,313.9 L589.3,312.0 L602.2,312.0 L606.9,315.8 L609.3,319.6 L606.9,323.0 L603.1,324.9 L602.7,331.1 L603.6,338.7 L602.7,346.3 L601.2,355.0 L583.6,355.0 L584.5,347.3 L586.4,338.7 L588.4,331.1 L586.4,326.3 L580.3,322.5 L574.5,318.7 L570.7,315.3Z" fill="url(#hx)"/><path d="M622.2,312.0 L640.0,312.0 L640.0,355.0 L622.2,355.0 L624.1,345.4 L626.0,335.8 L627.4,327.3 L627.0,321.5 L624.1,316.8Z" fill="url(#hx)"/></g><g clip-path="url(#c7)"><path d="M518,340H580V401H518Z" fill="#0000f5"/><path d="M518.0,340.0 L523.0,340.0 L521.5,350.0 L521.2,361.5 L523.5,373.0 L527.0,382.3 L529.8,385.8 L531.0,384.6 L531.5,373.0 L531.5,361.5 L532.7,350.0 L533.0,340.0 L544.4,340.0 L545.5,345.3 L543.3,356.3 L542.5,379.0 L540.8,389.2 L535.0,392.7 L533.8,398.4 L535.0,401.0 L518.0,401.0Z" fill="url(#hx)"/><path d="M541.9,401.0 L543.0,395.0 L546.0,393.8 L548.8,396.0 L549.5,401.0Z" fill="url(#hx)"/><path d="M556.6,340.0 L570.0,340.0 L568.4,350.0 L567.2,361.5 L566.0,379.0 L566.0,388.0 L570.7,393.8 L574.2,401.0 L561.5,401.0 L559.2,392.7 L553.4,389.2 L553.4,379.0 L554.0,361.5 L554.6,350.0Z" fill="url(#hx)"/></g><g clip-path="url(#c8)"><path d="M545,270H595V320H545Z" fill="#0000f5"/><path d="M545.0,270.0 L550.3,270.0 L551.2,275.0 L554.4,278.8 L557.5,281.9 L558.8,285.6 L561.9,289.4 L565.6,290.0 L568.4,288.1 L568.8,284.4 L567.5,281.2 L563.8,276.9 L561.9,273.1 L561.9,270.0 L571.2,270.0 L571.9,273.8 L575.0,276.9 L578.8,281.2 L581.9,285.6 L585.0,289.4 L588.1,293.1 L590.0,295.0 L580.0,295.0 L578.8,291.2 L575.0,290.0 L571.2,291.2 L570.6,295.0 L560.6,295.0 L560.0,293.8 L557.5,290.6 L552.5,288.1 L547.5,285.0 L545.0,279.4Z" fill="url(#hx)"/><path d="M587.5,270.0 L595.0,270.0 L595.0,282.5 L592.5,280.6 L588.8,279.4 L586.2,276.2 L586.2,272.5Z" fill="url(#hx)"/><path d="M553.1,296.2 L555.6,296.9 L556.9,300.0 L556.2,303.1 L552.5,306.9 L550.6,310.6 L549.4,315.0 L546.9,316.9 L545.0,316.9 L545.0,304.4 L548.8,302.5 L551.2,298.8Z" fill="url(#hx)"/><path d="M560.0,294.9 L570.0,294.9 L569.4,298.8 L566.9,300.6 L563.8,300.0 L561.2,297.5Z" fill="url(#hx)"/><path d="M579.4,294.9 L590.0,294.9 L592.5,298.8 L595.0,301.2 L595.0,316.2 L592.5,315.0 L589.4,311.9 L588.8,307.5 L589.4,304.4 L587.5,301.9 L582.5,301.9 L580.0,304.4 L578.8,308.8 L578.8,312.5 L580.0,315.6 L583.8,318.8 L585.0,320.0 L575.0,320.0 L571.2,315.6 L568.1,313.1 L563.8,316.2 L562.5,320.0 L551.9,320.0 L554.4,316.9 L559.4,313.8 L563.8,309.4 L568.1,305.6 L572.5,301.9 L577.5,298.8Z" fill="url(#hx)"/></g><ellipse cx="514.4" cy="285.5" rx="0.6" ry="0.9" fill="#a8ecfb"/><ellipse cx="519.5" cy="294.6" rx="0.7" ry="2.2" fill="#a8ecfb"/><ellipse cx="494.2" cy="309.3" rx="0.8" ry="2.2" fill="#a8ecfb"/><ellipse cx="514.2" cy="309.0" rx="0.6" ry="1.2" fill="#a8ecfb"/><ellipse cx="527.9" cy="308.5" rx="1.5" ry="0.6" fill="#a8ecfb"/><ellipse cx="662.4" cy="217.4" rx="38.6" ry="46.5" fill="#6af5ff"/><ellipse cx="662.4" cy="217.4" rx="33.7" ry="40.6" fill="#6ee8a8"/><ellipse cx="662.4" cy="217.4" rx="31.3" ry="35.7" fill="#22e01a"/><ellipse cx="662.4" cy="217.4" rx="28.7" ry="32.5" fill="#c8f000"/><ellipse cx="662.4" cy="217.4" rx="25.8" ry="29" fill="#f0f000"/><ellipse cx="662.4" cy="217.4" rx="22.5" ry="25.5" fill="#ffd200"/><ellipse cx="662.4" cy="217.4" rx="18.8" ry="21.7" fill="#ff9400"/><ellipse cx="662.5" cy="375" rx="38.6" ry="48.0" fill="#6af5ff"/><ellipse cx="662.5" cy="376" rx="33.7" ry="41.300000000000004" fill="#6ee8a8"/><ellipse cx="662.5" cy="378" rx="31.3" ry="35.7" fill="#22e01a"/><ellipse cx="662.5" cy="378" rx="28.7" ry="32.5" fill="#c8f000"/><ellipse cx="662.5" cy="378" rx="25.8" ry="29" fill="#f0f000"/><ellipse cx="662.5" cy="378" rx="22.5" ry="25.5" fill="#ffd200"/><ellipse cx="662.5" cy="378" rx="18.8" ry="21.7" fill="#ff9400"/><ellipse cx="662.5" cy="378" rx="15.9" ry="18.7" fill="#ff5400"/><ellipse cx="662.5" cy="378.7" rx="10.3" ry="11.7" fill="url(#hp)"/><ellipse cx="445" cy="378" rx="21" ry="25" fill="#6af5ff"/><ellipse cx="445" cy="380" rx="14.6" ry="22.6" fill="#6ee8a8"/><ellipse cx="445" cy="379" rx="11.2" ry="17.5" fill="#3ee83a"/></g><rect x="454.6" y="234.4" width="243.4" height="165.9" fill="none" stroke="#4a4a4a" stroke-width="0.8"/><g font-family="Liberation Sans" font-size="8.7" fill="#2a2a2a"><path d="M454.6,400.3V403.5" stroke="#333" stroke-width="0.8"/><text x="454.6" y="413.2" text-anchor="middle">0</text><path d="M479.4,400.3V403.5" stroke="#333" stroke-width="0.8"/><text x="479.4" y="413.2" text-anchor="middle">5</text><path d="M504.2,400.3V403.5" stroke="#333" stroke-width="0.8"/><text x="504.2" y="413.2" text-anchor="middle">10</text><path d="M529.1,400.3V403.5" stroke="#333" stroke-width="0.8"/><text x="529.1" y="413.2" text-anchor="middle">15</text><path d="M553.9,400.3V403.5" stroke="#333" stroke-width="0.8"/><text x="553.9" y="413.2" text-anchor="middle">20</text><path d="M578.7,400.3V403.5" stroke="#333" stroke-width="0.8"/><text x="578.7" y="413.2" text-anchor="middle">25</text><path d="M603.5,400.3V403.5" stroke="#333" stroke-width="0.8"/><text x="603.5" y="413.2" text-anchor="middle">30</text><path d="M628.4,400.3V403.5" stroke="#333" stroke-width="0.8"/><text x="628.4" y="413.2" text-anchor="middle">35</text><path d="M653.2,400.3V403.5" stroke="#333" stroke-width="0.8"/><text x="653.2" y="413.2" text-anchor="middle">40</text><path d="M678.0,400.3V403.5" stroke="#333" stroke-width="0.8"/><text x="678.0" y="413.2" text-anchor="middle">45</text><path d="M454.6,400.3H451.3" stroke="#333" stroke-width="0.8"/><text x="448.5" y="403.2" text-anchor="end">0</text><path d="M454.6,371.5H451.3" stroke="#333" stroke-width="0.8"/><text x="448.5" y="374.4" text-anchor="end">5</text><path d="M454.6,342.8H451.3" stroke="#333" stroke-width="0.8"/><text x="448.5" y="345.7" text-anchor="end">10</text><path d="M454.6,314.0H451.3" stroke="#333" stroke-width="0.8"/><text x="448.5" y="316.9" text-anchor="end">15</text><path d="M454.6,285.3H451.3" stroke="#333" stroke-width="0.8"/><text x="448.5" y="288.2" text-anchor="end">20</text><path d="M454.6,256.5H451.3" stroke="#333" stroke-width="0.8"/><text x="448.5" y="259.4" text-anchor="end">25</text></g><text x="576.5" y="423.6" font-family="Liberation Sans" font-size="9.4" fill="#2a2a2a" text-anchor="middle">X</text><text transform="translate(434.2,317.5) rotate(-90)" font-family="Liberation Sans" font-size="9.4" fill="#2a2a2a" text-anchor="middle">Y</text><text x="576" y="213" font-family="Liberation Sans" font-size="8.6" font-weight="bold" fill="#111" text-anchor="middle">Cone amplitude</text><text x="455" y="226" font-family="Liberation Sans" font-size="8.4" fill="#222">Left title test</text><text x="697.6" y="226" font-family="Liberation Sans" font-size="8.4" fill="#222" text-anchor="end">right title test</text><rect x="704" y="371.85" width="6.6" height="12.20" fill="#0000f5"/><rect x="704" y="359.69" width="6.6" height="12.20" fill="url(#hx)"/><rect x="704" y="347.54" width="6.6" height="12.20" fill="#6af5ff"/><rect x="704" y="335.38" width="6.6" height="12.20" fill="#6ee8a8"/><rect x="704" y="323.23" width="6.6" height="12.20" fill="#22e01a"/><rect x="704" y="311.07" width="6.6" height="12.20" fill="#c8f000"/><rect x="704" y="298.92" width="6.6" height="12.20" fill="#f0f000"/><rect x="704" y="286.76" width="6.6" height="12.20" fill="#ffd200"/><rect x="704" y="274.61" width="6.6" height="12.20" fill="#ff9400"/><rect x="704" y="262.45" width="6.6" height="12.20" fill="#ff5400"/><rect x="704" y="250.30" width="6.6" height="12.20" fill="url(#hp)"/><rect x="704" y="250.3" width="6.6" height="133.7" fill="none" stroke="#888" stroke-width="0.6"/><path d="M710.6,371.8H714" stroke="#333" stroke-width="0.8"/><text x="717" y="375.0" font-family="Liberation Serif" font-size="9.5" font-weight="bold" font-style="italic" fill="#111">0</text><path d="M710.6,359.7H714" stroke="#333" stroke-width="0.8"/><text x="717" y="362.9" font-family="Liberation Serif" font-size="9.5" font-weight="bold" font-style="italic" fill="#111">1</text><path d="M710.6,347.5H714" stroke="#333" stroke-width="0.8"/><text x="717" y="350.7" font-family="Liberation Serif" font-size="9.5" font-weight="bold" font-style="italic" fill="#111">2</text><path d="M710.6,335.4H714" stroke="#333" stroke-width="0.8"/><text x="717" y="338.6" font-family="Liberation Serif" font-size="9.5" font-weight="bold" font-style="italic" fill="#111">3</text><path d="M710.6,323.2H714" stroke="#333" stroke-width="0.8"/><text x="717" y="326.4" font-family="Liberation Serif" font-size="9.5" font-weight="bold" font-style="italic" fill="#111">4</text><path d="M710.6,311.1H714" stroke="#333" stroke-width="0.8"/><text x="717" y="314.3" font-family="Liberation Serif" font-size="9.5" font-weight="bold" font-style="italic" fill="#111">5</text><path d="M710.6,298.9H714" stroke="#333" stroke-width="0.8"/><text x="717" y="302.1" font-family="Liberation Serif" font-size="9.5" font-weight="bold" font-style="italic" fill="#111">6</text><path d="M710.6,286.8H714" stroke="#333" stroke-width="0.8"/><text x="717" y="290.0" font-family="Liberation Serif" font-size="9.5" font-weight="bold" font-style="italic" fill="#111">7</text><path d="M710.6,274.6H714" stroke="#333" stroke-width="0.8"/><text x="717" y="277.8" font-family="Liberation Serif" font-size="9.5" font-weight="bold" font-style="italic" fill="#111">8</text><path d="M710.6,262.5H714" stroke="#333" stroke-width="0.8"/><text x="717" y="265.7" font-family="Liberation Serif" font-size="9.5" font-weight="bold" font-style="italic" fill="#111">9</text><text x="705" y="245.2" font-family="Liberation Serif" font-size="10.4" font-weight="bold" fill="#111" textLength="80" lengthAdjust="spacing">Label Test (km<tspan font-size="6.5" dy="-3.5">2</tspan><tspan dy="3.5">)</tspan></text></svg>
<div class="a" style="left:715px;top:437.5px;width:85px;height:13.5px;background:#4a4d50"></div>
<div class="a" style="left:715px;top:437.5px;width:3px;height:13.5px;background:#4a88c7"></div>
<div class="t" style="left:744px;top:440px;font-size:6.3px">4% / 4.0G</div>
</body></html>
